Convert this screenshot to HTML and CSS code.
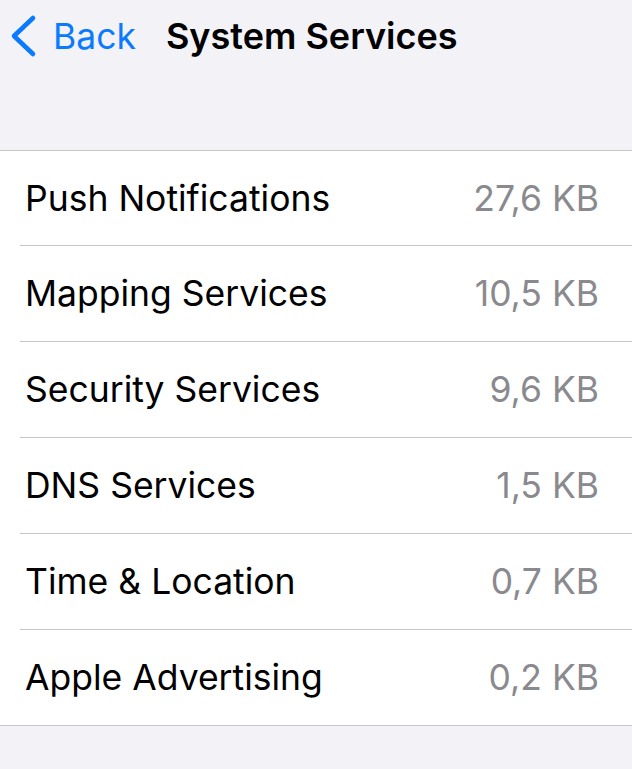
FILE: index.html
```html
<!DOCTYPE html>
<html lang="en">
<head>
  <meta charset="UTF-8">
  <meta name="viewport" content="width=device-width,initial-scale=1">
  <title>System Services</title>
  <link rel="stylesheet" href="styles.css">
</head>
<body>

<div class="nav">
  <a class="back" href="#">
    <svg class="chevron" width="28" height="44" viewBox="0 0 28 44">
      <path d="M24 4 L5 22 L24 40" fill="none" stroke="currentColor" stroke-width="4.6" stroke-linecap="round" stroke-linejoin="round"/>
    </svg>
    <span>Back</span>
  </a>
  <div class="title">System Services</div>
</div>

<ul class="list">
  <li class="row"><span class="label">Push Notifications</span><span class="value">27,6 KB</span></li>
  <li class="row"><span class="label">Mapping Services</span><span class="value">10,5 KB</span></li>
  <li class="row"><span class="label">Security Services</span><span class="value">9,6 KB</span></li>
  <li class="row"><span class="label">DNS Services</span><span class="value">1,5 KB</span></li>
  <li class="row"><span class="label">Time &amp; Location</span><span class="value">0,7 KB</span></li>
  <li class="row"><span class="label">Apple Advertising</span><span class="value">0,2 KB</span></li>
</ul>

</body>
</html>
```

FILE: styles.css
```css
body {
  margin: 0;
  background: #f2f2f7;
  font-family: Inter, "Liberation Sans", sans-serif;
  color: #000;
}

.nav {
  display: flex;
  align-items: center;
  height: 72px;
  padding-left: 9px;
  margin-bottom: 78px;
}

.back {
  display: flex;
  align-items: center;
  color: #0a7aff;
  text-decoration: none;
  font-size: 35.5px;
}

.back span {
  margin-left: 16px;
}

.title {
  margin-left: 30px;
  font-size: 36px;
  font-weight: 600;
}

.list {
  list-style: none;
  margin: 0;
  padding: 0 0 0 20px;
  background: #fff;
  border-top: 1px solid #c6c6c8;
  border-bottom: 1px solid #c6c6c8;
}

.row {
  display: flex;
  align-items: center;
  justify-content: space-between;
  height: 95px;
  padding: 0 33px 0 5px;
  font-size: 35.5px;
  border-bottom: 1px solid #c6c6c8;
}

.row:first-child {
  height: 94px;
}

.row:last-child {
  border-bottom: none;
}

.value {
  color: #8a8a8e;
}
```
